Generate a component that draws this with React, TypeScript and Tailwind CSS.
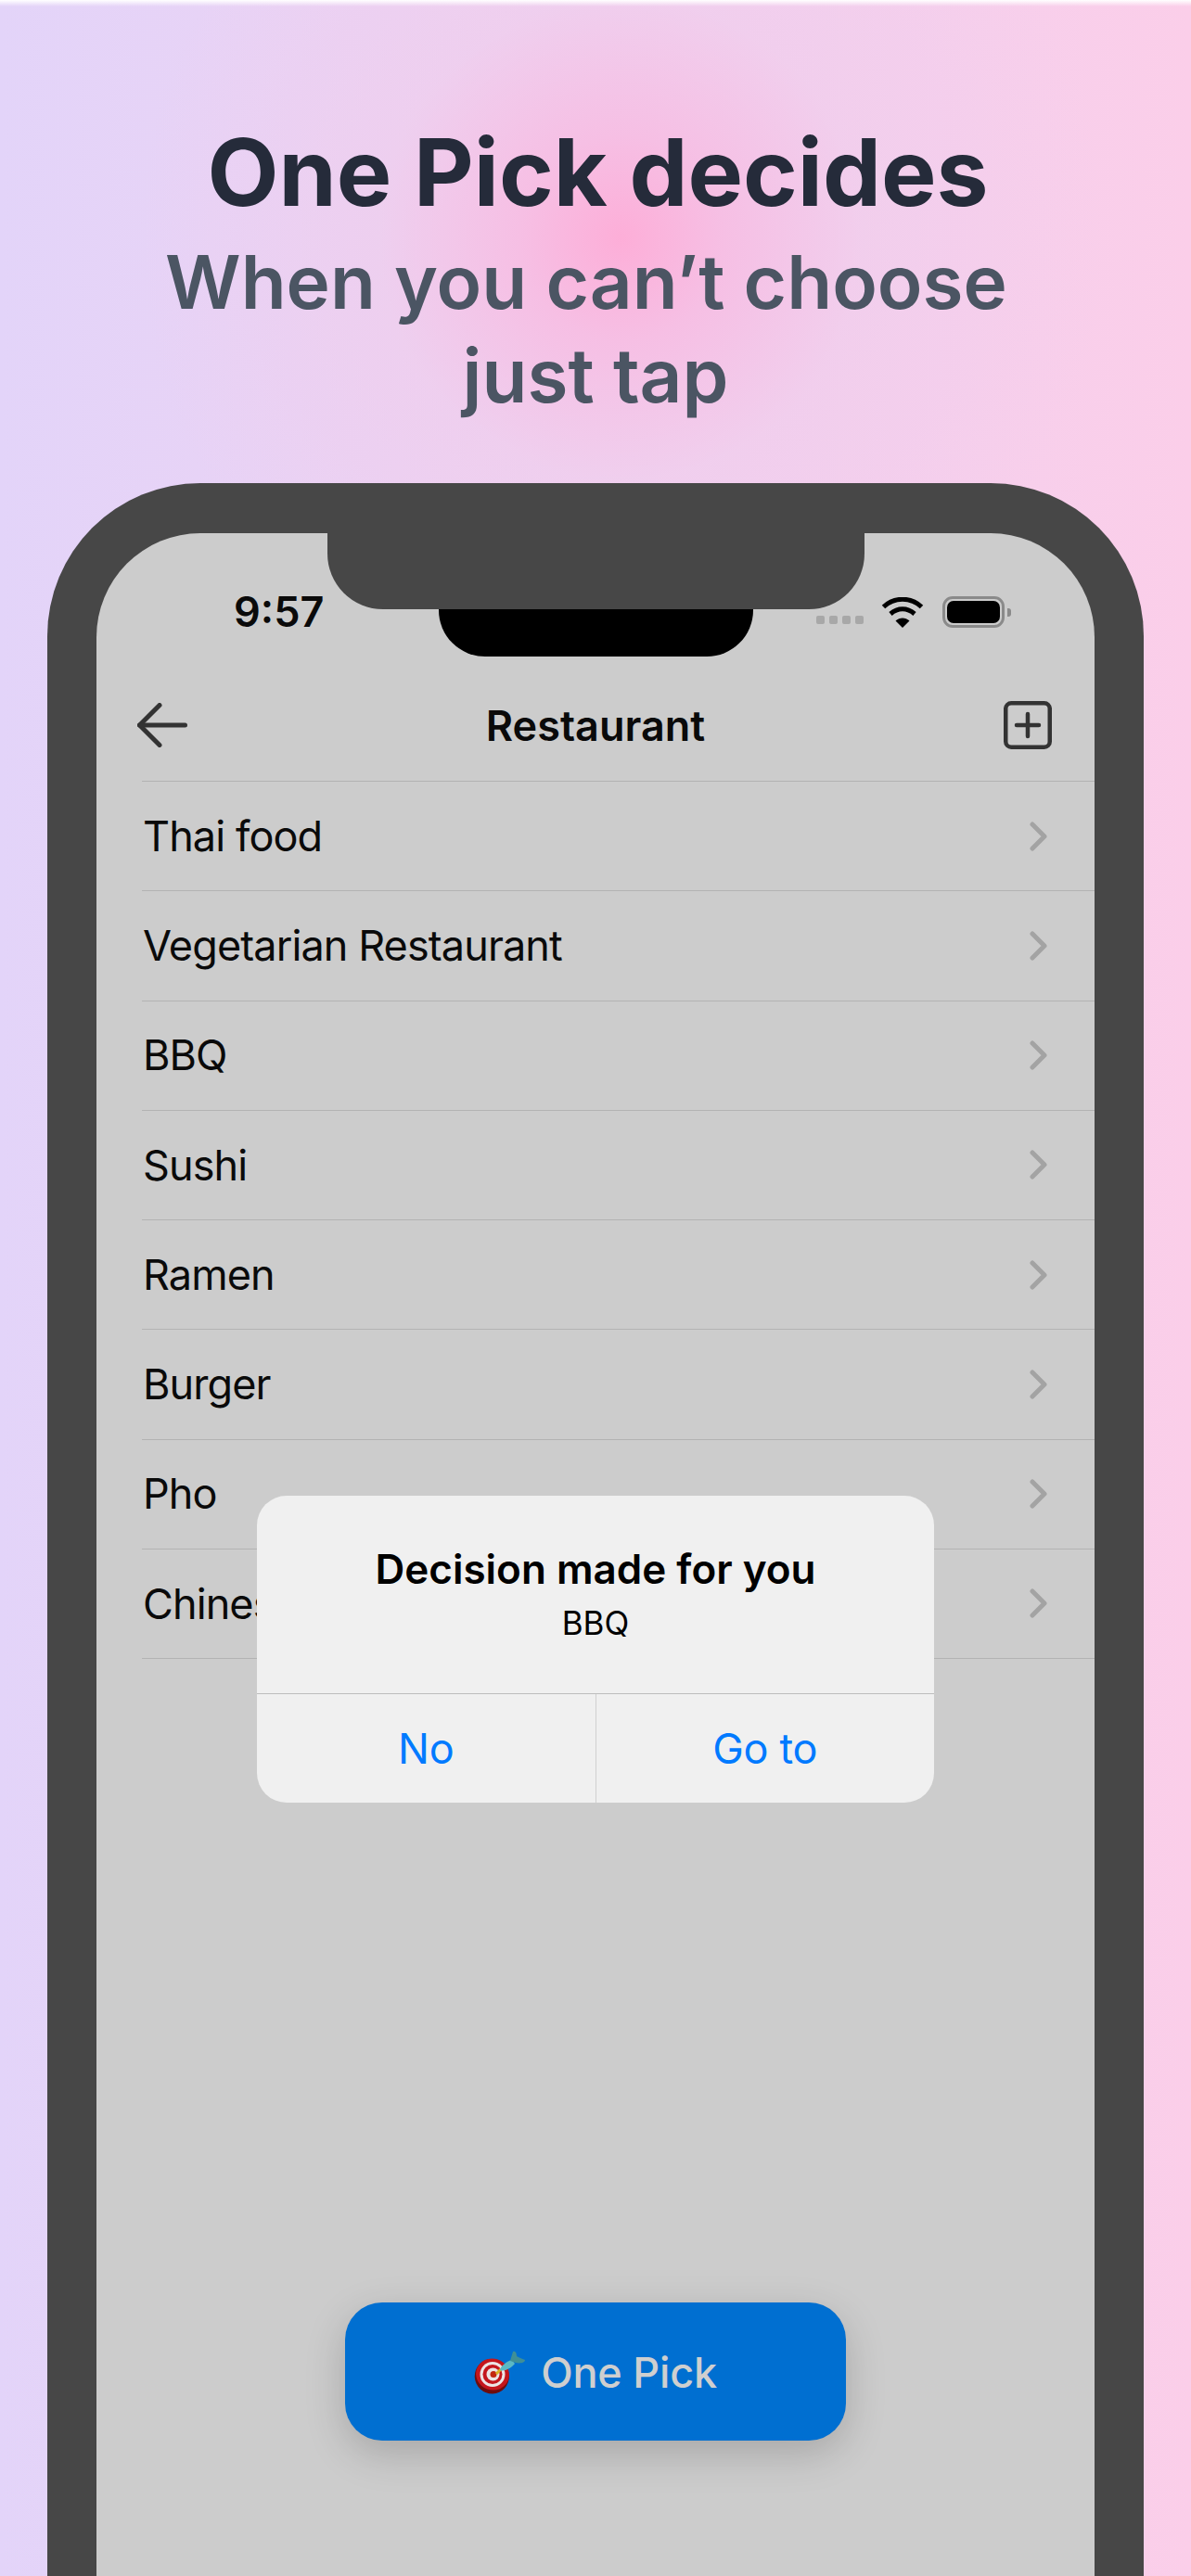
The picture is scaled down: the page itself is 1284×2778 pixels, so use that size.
import React from 'react';

const rows = ['Thai food', 'Vegetarian Restaurant', 'BBQ', 'Sushi', 'Ramen', 'Burger', 'Pho', 'Chinese'];

const DartIcon = () => (
    <svg width="55" height="47" viewBox="0 0 55 47">
        <ellipse cx="19.3" cy="27.7" rx="18.5" ry="18.8" fill="#6e0d0d" transform="rotate(-25 19.3 27.7)" />
        <ellipse cx="20" cy="25.5" rx="18" ry="17" fill="#c4161c" transform="rotate(20 20 25.5)" />
        <circle cx="20" cy="25.5" r="13.5" fill="#ece4e4" />
        <circle cx="20" cy="25.5" r="10.5" fill="#c4161c" />
        <circle cx="20.5" cy="25.5" r="7" fill="#ece4e4" />
        <circle cx="21" cy="25.5" r="3.5" fill="#c2280f" />
        <path d="M24 25 L29 20" stroke="#d9b320" strokeWidth="3" />
        <path d="M28 21 C28 17 36 11 41 10 L44 14 C40 19 32 23 28 21 Z" fill="#5bb8c4" />
        <path d="M39 11 L42 1 C45 0 46 3 46 6 L50 8 L55 10 C55 13 50 14 45 13 Z" fill="#3f8f96" />
    </svg>
);

const App: React.FC = () => {
    return (
        <div className="relative h-[2778px] overflow-hidden bg-[radial-gradient(circle_at_670px_257px,#fdaed8_0px,#f6bfe4_110px,rgba(240,205,236,0.6)_260px,rgba(240,205,236,0)_520px),linear-gradient(90deg,#e3d4f9,#fbcee9)] font-['Inter',sans-serif]">
            <div className="h-[7px] bg-linear-to-b from-white to-transparent"></div>

            {/* titulo */}
            <div className="h-[514px] pt-[124px] text-center">
                <h1 className="pl-[5px] text-[100px] leading-[110px] font-bold text-[#252b3a]">One Pick decides</h1>
                <p className="mt-[12px] text-[80px] leading-[101px] font-semibold text-[#4b5563]">
                    When you can’t choose&nbsp;
                    <br />
                    just tap
                </p>
            </div>

            {/* telefone */}
            <div className="mx-[51px] h-[2500px] rounded-[165px] bg-[#474747] px-[53px] pt-[54px]">
                <div className="relative h-[2446px] overflow-hidden rounded-[112px] bg-[#cccccc]">
                    <div className="absolute top-0 left-[369px] h-[133px] w-[339px] rounded-b-[50px] bg-black"></div>
                    <div className="absolute top-0 left-[249px] h-[82px] w-[579px] rounded-b-[60px] bg-[#474747]"></div>

                    {/* status */}
                    <div className="mt-[60px] flex h-[50px] items-center justify-between pr-[90px] pl-[148px]">
                        <span className="text-[45px] leading-[50px] font-semibold text-[#0a0a0a]">9:57</span>
                        <div className="flex items-center">
                            <div className="mt-[17px] mr-[19px] flex gap-[5px]">
                                <div className="h-[9px] w-[9px] rounded-[2px] bg-[#a8a8a8]"></div>
                                <div className="h-[9px] w-[9px] rounded-[2px] bg-[#a8a8a8]"></div>
                                <div className="h-[9px] w-[9px] rounded-[2px] bg-[#a8a8a8]"></div>
                                <div className="h-[9px] w-[9px] rounded-[2px] bg-[#a8a8a8]"></div>
                            </div>
                            <svg width="46" height="33" viewBox="0 0 46 33" className="mr-[20px]">
                                <path d="M2.5 10.5 C14 -0.5 32 -0.5 43.5 10.5" fill="none" stroke="#000" strokeWidth="5" />
                                <path d="M10 18 C18 11 28 11 36 18" fill="none" stroke="#000" strokeWidth="5" />
                                <path d="M23 33 L15.5 25.5 C20 21.5 26 21.5 30.5 25.5 Z" fill="#000" />
                            </svg>
                            <div className="flex h-[34px] w-[67px] items-center justify-center rounded-[11px] border-[3px] border-[#8a8a8a]">
                                <div className="h-[24px] w-[57px] rounded-[7px] bg-black"></div>
                            </div>
                            <div className="ml-[3px] h-[9px] w-[4px] rounded-r-[3px] bg-[#8a8a8a]"></div>
                        </div>
                    </div>

                    {/* nav */}
                    <div className="mt-[37px] flex h-[120px] items-center justify-between pr-[46px] pl-[44px]">
                        <svg width="54" height="48" viewBox="0 0 54 48" fill="none" stroke="#333" strokeWidth="5" strokeLinecap="round" strokeLinejoin="round">
                            <path d="M24 2.5 L2.5 24 L24 45.5" />
                            <path d="M2.5 24 H51.5" />
                        </svg>
                        <span className="mt-[2px] text-[45px] font-semibold text-[#0a0a0a]">Restaurant</span>
                        <svg width="52" height="52" viewBox="0 0 52 52" fill="none" stroke="#333" strokeWidth="4.5" strokeLinecap="round">
                            <rect x="2.25" y="2.25" width="47.5" height="47.5" rx="6" />
                            <path d="M26 14 V38 M14 26 H38" />
                        </svg>
                    </div>

                    {/* lista */}
                    <div className="ml-[49px] border-t border-[#b3b3b3]">
                        {rows.map((row) => (
                            <div key={row} className="flex h-[118.25px] items-center justify-between border-b border-[#b3b3b3] pr-[51px] pl-[1px]">
                                <span className="text-[45px] tracking-[-0.9px] text-[#0a0a0a]">{row}</span>
                                <svg width="19" height="32" viewBox="0 0 19 32" fill="none" stroke="#a3a3a3" strokeWidth="5" strokeLinecap="round" strokeLinejoin="round">
                                    <path d="M3 3 L16 16 L3 29" />
                                </svg>
                            </div>
                        ))}
                    </div>

                    {/* alerta */}
                    <div className="absolute top-[1038px] left-[173px] flex h-[331px] w-[730px] flex-col overflow-hidden rounded-[32px] bg-[#f0f0f0]">
                        <div className="flex h-[214px] flex-col items-center border-b border-[#bdbdbd] pt-[49px]">
                            <span className="text-[44px] leading-[60px] font-semibold text-black">Decision made for you</span>
                            <span className="mt-[8px] text-[35px] leading-[40px] text-black">BBQ</span>
                        </div>
                        <div className="flex flex-1 text-[45px] tracking-[-0.3px] text-[#007aff]">
                            <div className="flex flex-1 items-center justify-center border-r border-[#d0d0d0]">No</div>
                            <div className="flex flex-1 items-center justify-center">Go to</div>
                        </div>
                    </div>

                    {/* botao */}
                    <div className="absolute top-[1908px] left-[268px] flex h-[149px] w-[540px] items-center justify-center gap-[17px] rounded-[40px] bg-[#006fd1] pt-[2px] shadow-[0_14px_44px_rgba(0,0,0,0.18)]">
                        <DartIcon />
                        <span className="text-[45px] font-medium tracking-[-0.2px] text-[#cfcfcf]">One Pick</span>
                    </div>
                </div>
            </div>
        </div>
    );
};

export default App;
